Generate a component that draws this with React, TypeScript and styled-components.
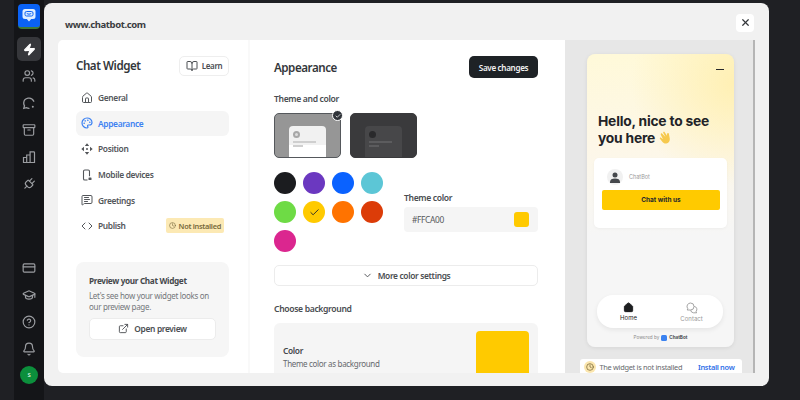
import React from "react";
import styled, { createGlobalStyle } from "styled-components";
import {
  Archive,
  Bell,
  BookOpen,
  Check,
  ChevronDown,
  CircleHelp,
  Clock,
  Code,
  CreditCard,
  ExternalLink,
  GraduationCap,
  Home,
  MessageSquareText,
  Palette,
  Plug,
  Users,
  X,
  Zap,
} from "lucide-react";

const GlobalStyle = createGlobalStyle`
  html, body {
    margin: 0;
    padding: 0;
    background: #1f2024;
    font-family: "Noto Sans", "Liberation Sans", sans-serif;
  }
  * {
    box-sizing: border-box;
    letter-spacing: -0.04em;
  }
`;

const Page = styled.div`
  display: flex;
  width: 800px;
  height: 400px;
  overflow: hidden;
  background: #1f2024;
`;

const Rail = styled.nav`
  display: flex;
  flex-direction: column;
  align-items: center;
  width: 30px;
  height: 400px;
  margin-left: 14px;
  padding-top: 4px;
  background: #141518;
`;

const RailIcon = styled.div<{ $active?: boolean }>`
  display: flex;
  align-items: center;
  justify-content: center;
  width: 24px;
  height: 24px;
  margin-top: ${(p) => (p.$active ? "8px" : "3px")};
  border-radius: 5px;
  color: ${(p) => (p.$active ? "#ffffff" : "#9b9da1")};
  background: ${(p) => (p.$active ? "#36373b" : "transparent")};
`;

const TiltedPlug = styled(Plug)`
  transform: rotate(45deg);
`;

const Logo = styled.div`
  display: flex;
  align-items: center;
  justify-content: center;
  width: 22px;
  height: 25px;
  border-radius: 4px;
  background: #0a62f5;
  border-bottom: 2px solid #3f7a3a;
`;

const RailSpacer = styled.div`
  flex: 1;
`;

const Avatar = styled.div`
  display: flex;
  align-items: center;
  justify-content: center;
  width: 18px;
  height: 18px;
  margin: 5px 0 16px;
  border-radius: 50%;
  background: #0c8f3c;
  color: #d8f0df;
  font-size: 6px;
  font-weight: 600;
`;

const Modal = styled.main`
  display: flex;
  flex-direction: column;
  width: 725px;
  height: 383px;
  margin-top: 3px;
  padding: 0 14px 13px;
  border-radius: 8px;
  background: #f1f1f1;
`;

const ModalHeader = styled.header`
  display: flex;
  align-items: center;
  justify-content: space-between;
  flex: 0 0 37px;
  padding: 6px 1px 0 7px;
  color: #3a3c40;
  font-size: 9.5px;
  font-weight: 700;
`;

const CloseButton = styled.button`
  display: flex;
  align-items: center;
  justify-content: center;
  width: 18px;
  height: 18px;
  margin-bottom: 4px;
  padding: 0;
  border: 0;
  border-radius: 4px;
  background: #ffffff;
  color: #33363a;
`;

const ModalBody = styled.div`
  display: flex;
  flex: 1;
  min-height: 0;
  overflow: hidden;
  border-radius: 5px 0 0 5px;
`;

const SidePanel = styled.aside`
  display: flex;
  flex-direction: column;
  flex: 0 0 192px;
  padding: 16px 19px 0 18px;
  border-right: 2px solid #f9f9f9;
  background: #ffffff;
`;

const SideTop = styled.div`
  display: flex;
  align-items: center;
  justify-content: space-between;
  height: 19px;
  margin-bottom: 10px;
`;

const PanelTitle = styled.h2`
  margin: 0;
  color: #33363a;
  font-size: 11.6px;
  font-weight: 600;
`;

const LearnButton = styled.button`
  display: flex;
  align-items: center;
  justify-content: center;
  gap: 4px;
  width: 50px;
  height: 20px;
  padding: 0;
  border: 1px solid #eeeeee;
  border-radius: 5px;
  background: #ffffff;
  color: #4b4e52;
  font-family: inherit;
  font-size: 8px;
  font-weight: 600;
`;

const NavList = styled.div`
  display: flex;
  flex-direction: column;
`;

const NavRow = styled.div<{ $active?: boolean }>`
  display: flex;
  align-items: center;
  gap: 5px;
  height: 25.6px;
  padding: 0 5px;
  border-radius: 6px;
  background: ${(p) => (p.$active ? "#f5f5f5" : "transparent")};
  color: ${(p) => (p.$active ? "#3d82f2" : "#53565a")};
  font-size: 8.4px;
  font-weight: 600;
`;

const Badge = styled.span`
  display: flex;
  align-items: center;
  gap: 3px;
  height: 15px;
  margin-left: auto;
  padding: 0 3px 0 3px;
  border-radius: 2px;
  background: #fce9b4;
  color: #77683a;
  font-size: 7.4px;
  font-weight: 600;
`;

const PreviewCard = styled.section`
  display: flex;
  flex-direction: column;
  height: 95px;
  margin-top: 23px;
  padding: 12px 13px;
  border-radius: 8px;
  background: #f6f6f6;
`;

const PreviewTitle = styled.strong`
  color: #45484c;
  font-size: 8.2px;
  font-weight: 700;
  line-height: 13px;
`;

const PreviewText = styled.p`
  margin: 3px 0 6px;
  color: #74777b;
  font-size: 8px;
  line-height: 11px;
`;

const OutlineButton = styled.button`
  display: flex;
  align-items: center;
  justify-content: center;
  gap: 5px;
  padding: 0;
  border: 1px solid #ececec;
  border-radius: 5px;
  background: #ffffff;
  color: #4b4e52;
  font-family: inherit;
  font-size: 8.4px;
  font-weight: 600;
`;

const PreviewButton = styled(OutlineButton)`
  flex: 0 0 22px;
  width: 127px;
`;

const Settings = styled.section`
  display: flex;
  flex-direction: column;
  flex: 0 0 315px;
  padding: 16px 27px 0 24px;
  background: #ffffff;
`;

const SettingsTop = styled.div`
  display: flex;
  align-items: center;
  justify-content: space-between;
  height: 22px;
`;

const SaveButton = styled.button`
  width: 69px;
  height: 22px;
  padding: 0;
  border: 0;
  border-radius: 5px;
  background: #1e2226;
  color: #f2f2f2;
  font-family: inherit;
  font-size: 8.1px;
  font-weight: 600;
`;

const Label = styled.div`
  color: #4a4d51;
  font-size: 8.6px;
  font-weight: 600;
  line-height: 12px;
`;

const SectionLabel = styled(Label)<{ $top: number }>`
  margin: ${(p) => p.$top}px 0 8px;
`;

const ThemeRow = styled.div`
  display: flex;
  gap: 9px;
`;

const ThemeThumb = styled.div<{ $dark?: boolean; $selected?: boolean }>`
  position: relative;
  display: flex;
  justify-content: center;
  align-items: flex-end;
  width: 67px;
  height: 45px;
  border: ${(p) => (p.$selected ? "1.5px solid #55585c" : "1px solid #3a3a3c")};
  border-radius: 5px;
  background: ${(p) => (p.$dark ? "#3a3a3c" : "#969696")};
`;

const ThumbCard = styled.div<{ $dark?: boolean }>`
  display: flex;
  flex-direction: column;
  align-items: flex-start;
  gap: 2px;
  width: 37px;
  height: 31px;
  padding: 5px 4px 0;
  border-radius: 4px 4px 0 0;
  background: ${(p) =>
    p.$dark ? "#474749" : "linear-gradient(#f1f1f1 0 62%, #ffffff 62%)"};
`;

const ThumbDot = styled.span<{ $dark?: boolean }>`
  width: 7px;
  height: 7px;
  margin-bottom: 1px;
  border: 2px solid ${(p) => (p.$dark ? "#2a2a2c" : "#a8a8a8")};
  border-radius: 50%;
  background: ${(p) => (p.$dark ? "#2a2a2c" : "#dddddd")};
`;

const ThumbLine = styled.span<{ $dark?: boolean; $short?: boolean }>`
  width: ${(p) => (p.$short ? "10px" : "23px")};
  height: 2px;
  background: ${(p) => (p.$dark ? "#5c5c5e" : "#cfcfcf")};
`;

const SelectedMark = styled.span`
  position: absolute;
  top: -4px;
  right: -3px;
  display: flex;
  align-items: center;
  justify-content: center;
  width: 11px;
  height: 11px;
  border: 1px solid #ffffff;
  border-radius: 50%;
  background: #30343a;
  color: #ffffff;
`;

const ColorRow = styled.div`
  display: flex;
  justify-content: space-between;
  margin-top: 14px;
`;

const Swatches = styled.div`
  display: grid;
  grid-template-columns: repeat(4, 22px);
  grid-auto-rows: 22px;
  gap: 7px;
`;

const Swatch = styled.div<{ $color: string }>`
  display: flex;
  align-items: center;
  justify-content: center;
  border-radius: 50%;
  background: ${(p) => p.$color};
  color: #26282b;
`;

const ThemeField = styled.div`
  display: flex;
  flex-direction: column;
  gap: 3px;
  width: 134px;
  margin-top: 20px;
`;

const ColorInput = styled.div`
  display: flex;
  align-items: center;
  justify-content: space-between;
  height: 25px;
  padding: 0 9px 0 8px;
  border-radius: 4px;
  background: #f5f5f5;
  color: #55585c;
  font-size: 8.4px;
`;

const InputChip = styled.span`
  width: 15px;
  height: 15px;
  border-radius: 3px;
  background: #ffca00;
`;

const MoreButton = styled(OutlineButton)`
  flex: 0 0 21px;
  width: 264px;
  margin-top: 13px;
`;

const BackgroundBox = styled.div`
  display: flex;
  align-items: flex-start;
  justify-content: space-between;
  flex: 0 0 70px;
  padding: 8px 9px 0;
  border-radius: 6px;
  background: #f5f5f5;
`;

const BackgroundCopy = styled.div`
  display: flex;
  flex-direction: column;
  gap: 1px;
  margin-top: 14px;
`;

const BackgroundName = styled.span`
  color: #45484c;
  font-size: 8.4px;
  font-weight: 600;
  line-height: 12px;
`;

const BackgroundHint = styled.span`
  color: #66696d;
  font-size: 8px;
  line-height: 12px;
`;

const BackgroundChip = styled.div`
  width: 53px;
  height: 60px;
  border-radius: 4px;
  background: #ffca00;
`;

const PreviewPane = styled.section`
  display: flex;
  flex-direction: column;
  align-items: center;
  flex: 1;
  padding: 14px 0 0 3px;
  background: #e7e7e7;
  border-right: 2px solid #b5b5b5;
`;

const WidgetFrame = styled.div`
  display: flex;
  flex-direction: column;
  flex: 0 0 293px;
  width: 147px;
  padding: 10px 7px 0;
  border-radius: 8px;
  background:
    radial-gradient(circle at 100% 10%, #fff0b4 0, rgba(255, 240, 180, 0) 34%),
    linear-gradient(180deg, #fff9d9 0, #fdf7e8 32%, #f6f6f6 62%);
  box-shadow: 0 1px 4px rgba(0, 0, 0, 0.08);
`;

const MinimizeBar = styled.span`
  align-self: flex-end;
  width: 8px;
  height: 1px;
  margin: 5px 3px 0 0;
  background: #26282b;
`;

const Greeting = styled.h3`
  margin: 43px 0 11px 4px;
  color: #222327;
  font-family: Inter, "Liberation Sans", sans-serif;
  font-size: 13.8px;
  font-weight: 700;
  line-height: 17px;
  letter-spacing: -0.2px;
`;

const ChatCard = styled.div`
  display: flex;
  flex-direction: column;
  height: 70px;
  padding: 11px 7px 0 8px;
  border-radius: 5px;
  background: #ffffff;
  box-shadow: 0 1px 3px rgba(0, 0, 0, 0.04);
`;

const AgentRow = styled.div`
  display: flex;
  align-items: center;
  gap: 6px;
  padding-left: 5px;
  color: #9a9a9a;
  font-family: Inter, "Liberation Sans", sans-serif;
  font-size: 5.5px;
  letter-spacing: 0;
`;

const AgentPhoto = styled.div`
  display: flex;
  align-items: center;
  justify-content: center;
  width: 16px;
  height: 16px;
  border-radius: 50%;
  background: #f1f1f1;
`;

const ChatButton = styled.button`
  height: 20px;
  margin-top: 5px;
  padding: 0;
  border: 0;
  border-radius: 2px;
  background: #ffca00;
  color: #26282b;
  font-family: Inter, "Liberation Sans", sans-serif;
  font-size: 6.5px;
  font-weight: 700;
  letter-spacing: 0;
`;

const TabBar = styled.div`
  display: grid;
  grid-template-columns: 1fr 1fr;
  height: 33px;
  margin: auto 4px 0 3px;
  border-radius: 16px;
  background: #ffffff;
  box-shadow: 0 2px 5px rgba(0, 0, 0, 0.07);
`;

const Tab = styled.div<{ $active?: boolean }>`
  display: flex;
  flex-direction: column;
  align-items: center;
  justify-content: center;
  gap: 1px;
  color: ${(p) => (p.$active ? "#1d1e20" : "#9a9a9a")};
  font-family: Inter, "Liberation Sans", sans-serif;
  font-size: 6px;
  letter-spacing: 0;
`;

const Powered = styled.div`
  display: flex;
  align-items: center;
  justify-content: center;
  gap: 2px;
  height: 19px;
  color: #8c8c8c;
  font-family: Inter, "Liberation Sans", sans-serif;
  font-size: 4.6px;
  letter-spacing: 0;
  strong {
    color: #45484c;
    font-weight: 700;
    letter-spacing: 0;
  }
`;

const PoweredMark = styled.span`
  width: 6px;
  height: 6px;
  border-radius: 1.5px;
  background: #3b82f0;
`;

const InstallNotice = styled.div`
  display: flex;
  align-items: center;
  flex: 0 0 22px;
  width: 162px;
  margin-top: 12px;
  padding: 0 7px 6px 4px;
  border-radius: 3px;
  background: #ffffff;
  color: #66696d;
  font-size: 7.4px;
  a {
    margin-left: auto;
    color: #2f6fe8;
    font-weight: 600;
  }
`;

const NoticeIcon = styled.span`
  display: flex;
  align-items: center;
  justify-content: center;
  width: 12px;
  height: 12px;
  margin-right: 4px;
  border-radius: 50%;
  background: #fbe6ae;
  color: #6b5a2a;
`;

const HandSvg = styled.svg`
  vertical-align: -2px;
`;

const colors = [
  "#1b1c1f",
  "#6b38c0",
  "#0a62ff",
  "#5cc6d6",
  "#6edb45",
  "#ffca00",
  "#ff7300",
  "#dc3c08",
  "#db268f",
];

function LogoMark() {
  return (
    <svg width="14" height="15" viewBox="0 0 14 15" fill="none">
      <path
        d="M3 1h8a2.5 2.5 0 0 1 2.5 2.5v5A2.5 2.5 0 0 1 11 11H9.2L7 13.4 4.8 11H3A2.5 2.5 0 0 1 .5 8.500v-5A2.500 2.500 0 0 1 3 1Z"
        fill="#dfeeff"
      />
      <rect x="3" y="3.500" width="8" height="4.500" rx="1.500" stroke="#0a62f5" strokeWidth="1" />
      <path d="M5 5.500c1.200 1 2.800 1 4 0" stroke="#0a62f5" strokeWidth="1" strokeLinecap="round" />
    </svg>
  );
}

function ChatLoopIcon() {
  return (
    <svg width="14" height="14" viewBox="0 0 14 14" fill="none" stroke="currentColor" strokeWidth="1.300" strokeLinecap="round">
      <path d="M11.800 5.200A5.300 5.300 0 0 0 1.700 7c0 1 .3 2 .8 2.800L1.800 12.300l2.600-.6c.8.400 1.600.6 2.600.6" />
      <circle cx="10.800" cy="10.800" r="1" fill="currentColor" stroke="none" />
    </svg>
  );
}

function StatsIcon() {
  return (
    <svg width="14" height="14" viewBox="0 0 14 14" fill="none" stroke="currentColor" strokeWidth="1.200">
      <path d="M1.500 7.500h3.200v5H1.500ZM4.700 5h3.400v7.500H4.700ZM8.100 1.800h3.600a.8.8 0 0 1 .8.800v9.900H8.100Z" />
    </svg>
  );
}

function PositionIcon() {
  return (
    <svg width="12" height="12" viewBox="0 0 12 12" fill="#53565a">
      <path d="M6 .3 8.200 3H3.800ZM6 11.700 3.800 9h4.400ZM.3 6 3 3.800v4.400ZM11.700 6 9 8.200V3.800Z" />
      <circle cx="6" cy="6" r="1" />
    </svg>
  );
}

function MobileIcon() {
  return (
    <svg width="12" height="12" viewBox="0 0 12 12" fill="none" stroke="#53565a" strokeWidth="1.100">
      <path d="M6.500 11H3.800A1.300 1.300 0 0 1 2.500 9.700V2.300A1.300 1.300 0 0 1 3.800 1h3.400a1.300 1.300 0 0 1 1.300 1.300v5" />
      <rect x="7.500" y="8.500" width="3" height="2.500" rx=".6" fill="#53565a" stroke="none" />
    </svg>
  );
}

function WaveHand() {
  return (
    <HandSvg width="15" height="15" viewBox="0 0 15 15">
      <path
        d="M4 3.500 7.500 7 5.300 3c-.5-1 .8-1.700 1.400-.8L9 5.800c-.2-1.400.1-2.500.9-2.700.7-.1 1 .5 1.100 1.400l.8 4.200c.3 2-1 4.500-3.500 4.800-1.800.2-3-.6-4-1.800L2 8.800c-.7-.9.3-1.800 1.100-1.100L5 9.300 2.800 4.700c-.4-.9.600-1.700 1.200-1.200Z"
        fill="#f6c94e"
      />
    </HandSvg>
  );
}

function PersonIcon() {
  return (
    <svg width="10" height="11" viewBox="0 0 10 11" fill="#45484c">
      <circle cx="5" cy="3" r="2.500" />
      <path d="M0 10c0-2.500 2-3.500 5-3.500s5 1 5 3.500v1H0Z" />
    </svg>
  );
}

function ContactIcon() {
  return (
    <svg width="12" height="12" viewBox="0 0 12 12" fill="none" stroke="#9a9a9a" strokeWidth="0.900">
      <path d="M4.500 1a3.500 3.500 0 0 1 3.500 3.500A3.500 3.500 0 0 1 4.500 8H1.200l.6-1.300A3.500 3.500 0 0 1 4.500 1Z" />
      <path d="M8.200 4.400a3 3 0 0 1 1.900 5l.5 1.400H7.400a3 3 0 0 1-2.700-2.700" />
    </svg>
  );
}

const navItems = [
  { label: "General", icon: <Home size={12} /> },
  { label: "Appearance", icon: <Palette size={12} strokeWidth={2.4} />, active: true },
  { label: "Position", icon: <PositionIcon /> },
  { label: "Mobile devices", icon: <MobileIcon /> },
  { label: "Greetings", icon: <MessageSquareText size={12} /> },
  { label: "Publish", icon: <Code size={12} />, badge: true },
];

export default function App() {
  return (
    <Page>
      <GlobalStyle />
      <Rail>
        <Logo>
          <LogoMark />
        </Logo>
        <RailIcon $active>
          <Zap size={13} fill="currentColor" />
        </RailIcon>
        <RailIcon>
          <Users size={14} />
        </RailIcon>
        <RailIcon>
          <ChatLoopIcon />
        </RailIcon>
        <RailIcon>
          <Archive size={14} />
        </RailIcon>
        <RailIcon>
          <StatsIcon />
        </RailIcon>
        <RailIcon>
          <TiltedPlug size={14} />
        </RailIcon>
        <RailSpacer />
        <RailIcon>
          <CreditCard size={14} />
        </RailIcon>
        <RailIcon>
          <GraduationCap size={14} />
        </RailIcon>
        <RailIcon>
          <CircleHelp size={14} />
        </RailIcon>
        <RailIcon>
          <Bell size={14} />
        </RailIcon>
        <Avatar>S</Avatar>
      </Rail>

      <Modal>
        <ModalHeader>
          <span>www.chatbot.com</span>
          <CloseButton aria-label="Close">
            <X size={11} strokeWidth={2.6} />
          </CloseButton>
        </ModalHeader>

        <ModalBody>
          <SidePanel>
            <SideTop>
              <PanelTitle>Chat Widget</PanelTitle>
              <LearnButton>
                <BookOpen size={12} />
                Learn
              </LearnButton>
            </SideTop>
            <NavList>
              {navItems.map((item) => (
                <NavRow key={item.label} $active={item.active}>
                  {item.icon}
                  <span>{item.label}</span>
                  {item.badge && (
                    <Badge>
                      <Clock size={7} />
                      Not installed
                    </Badge>
                  )}
                </NavRow>
              ))}
            </NavList>
            <PreviewCard>
              <PreviewTitle>Preview your Chat Widget</PreviewTitle>
              <PreviewText>
                Let's see how your widget looks on
                <br />
                our preview page.
              </PreviewText>
              <PreviewButton>
                <ExternalLink size={11} />
                Open preview
              </PreviewButton>
            </PreviewCard>
          </SidePanel>

          <Settings>
            <SettingsTop>
              <PanelTitle>Appearance</PanelTitle>
              <SaveButton>Save changes</SaveButton>
            </SettingsTop>
            <SectionLabel $top={15}>Theme and color</SectionLabel>
            <ThemeRow>
              <ThemeThumb $selected>
                <ThumbCard>
                  <ThumbDot />
                  <ThumbLine />
                  <ThumbLine $short />
                </ThumbCard>
                <SelectedMark>
                  <Check size={6} strokeWidth={3} />
                </SelectedMark>
              </ThemeThumb>
              <ThemeThumb $dark>
                <ThumbCard $dark>
                  <ThumbDot $dark />
                  <ThumbLine $dark />
                  <ThumbLine $dark $short />
                </ThumbCard>
              </ThemeThumb>
            </ThemeRow>
            <ColorRow>
              <Swatches>
                {colors.map((color) => (
                  <Swatch key={color} $color={color}>
                    {color === "#ffca00" && <Check size={11} strokeWidth={2} />}
                  </Swatch>
                ))}
              </Swatches>
              <ThemeField>
                <Label>Theme color</Label>
                <ColorInput>
                  #FFCA00
                  <InputChip />
                </ColorInput>
              </ThemeField>
            </ColorRow>
            <MoreButton>
              <ChevronDown size={11} />
              More color settings
            </MoreButton>
            <SectionLabel $top={17}>Choose background</SectionLabel>
            <BackgroundBox>
              <BackgroundCopy>
                <BackgroundName>Color</BackgroundName>
                <BackgroundHint>Theme color as background</BackgroundHint>
              </BackgroundCopy>
              <BackgroundChip />
            </BackgroundBox>
          </Settings>

          <PreviewPane>
            <WidgetFrame>
              <MinimizeBar />
              <Greeting>
                Hello, nice to see
                <br />
                you here <WaveHand />
              </Greeting>
              <ChatCard>
                <AgentRow>
                  <AgentPhoto>
                    <PersonIcon />
                  </AgentPhoto>
                  ChatBot
                </AgentRow>
                <ChatButton>Chat with us</ChatButton>
              </ChatCard>
              <TabBar>
                <Tab $active>
                  <Home size={11} fill="currentColor" />
                  Home
                </Tab>
                <Tab>
                  <ContactIcon />
                  Contact
                </Tab>
              </TabBar>
              <Powered>
                Powered by <PoweredMark /> <strong>ChatBot</strong>
              </Powered>
            </WidgetFrame>
            <InstallNotice>
              <NoticeIcon>
                <Clock size={8} />
              </NoticeIcon>
              The widget is not installed
              <a>Install now</a>
            </InstallNotice>
          </PreviewPane>
        </ModalBody>
      </Modal>
    </Page>
  );
}
